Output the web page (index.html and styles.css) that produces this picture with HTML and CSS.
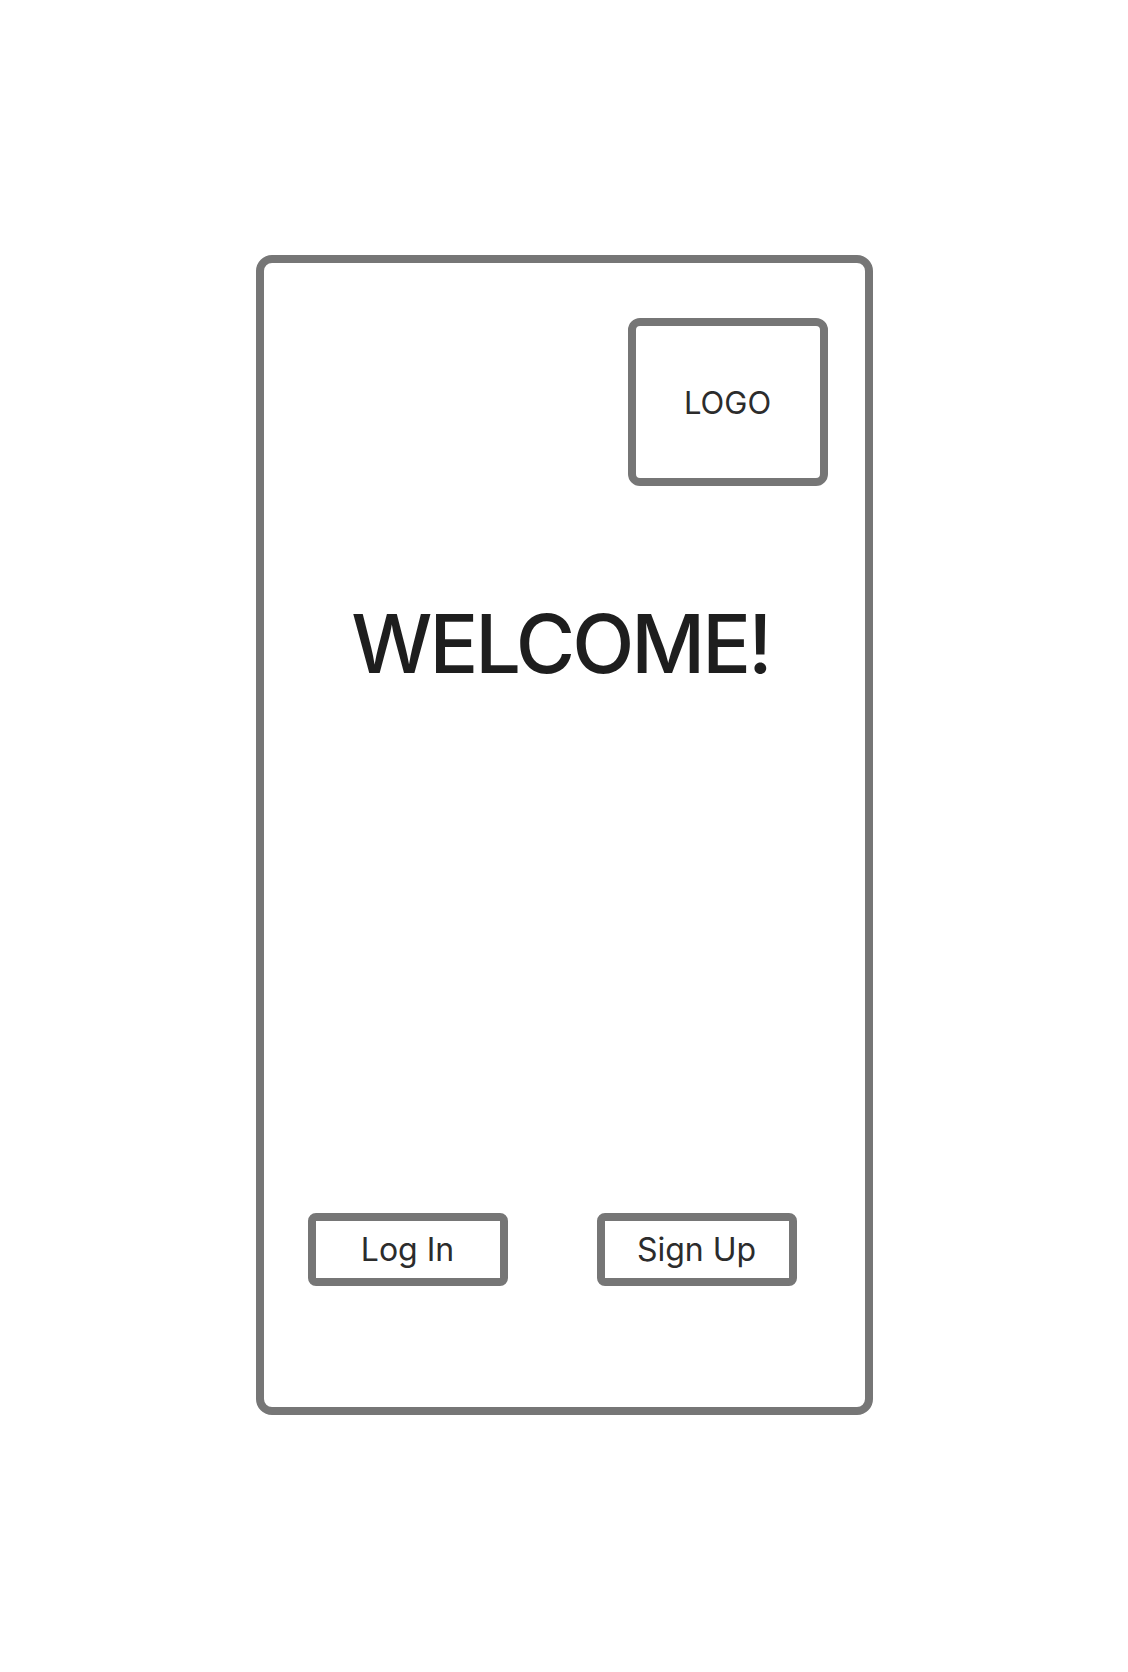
FILE: index.html
```html
<!DOCTYPE html>
<html lang="en">

<head>
    <meta charset="UTF-8">
    <meta name="viewport" content="width=device-width, initial-scale=1.0">
    <title>Welcome</title>
    <link rel="stylesheet" href="styles.css">
</head>

<body>
    <div class="phone">
        <div class="logo-box">LOGO</div>

        <h1 class="welcome">WELCOME!</h1>

        <div class="auth-buttons">
            <button class="auth-button" id="logIn">Log In</button>
            <button class="auth-button" id="signUp">Sign Up</button>
        </div>
    </div>
</body>

</html>
```

FILE: styles.css
```css
body {
    margin: 0;
    background-color: #fff;
    font-family: 'Inter', 'Noto Sans', sans-serif;
    display: flex;
    justify-content: center;
    padding-top: 255px;
}

.phone {
    box-sizing: border-box;
    width: 617px;
    height: 1160px;
    border: 8px solid #767676;
    border-radius: 16px;
    display: flex;
    flex-direction: column;
    padding: 55px 37px 121px 44px;
}

.logo-box {
    box-sizing: border-box;
    align-self: flex-end;
    width: 200px;
    height: 168px;
    border: 8px solid #767676;
    border-radius: 12px;
    display: flex;
    align-items: center;
    justify-content: center;
    font-size: 31px;
    color: #2c2c2c;
}

.welcome {
    margin: 118px 0 0 -14px;
    font-size: 81px;
    font-weight: 500;
    letter-spacing: -3px;
    line-height: 1;
    text-align: center;
    color: #1e1e1e;
}

.auth-buttons {
    margin-top: auto;
    display: flex;
    gap: 89px;
}

.auth-button {
    box-sizing: border-box;
    width: 200px;
    height: 73px;
    border: 8px solid #767676;
    border-radius: 8px;
    background-color: #fff;
    font-family: 'Inter', 'Noto Sans', sans-serif;
    font-size: 32px;
    color: #2c2c2c;
    padding: 0;
    cursor: pointer;
}
```
